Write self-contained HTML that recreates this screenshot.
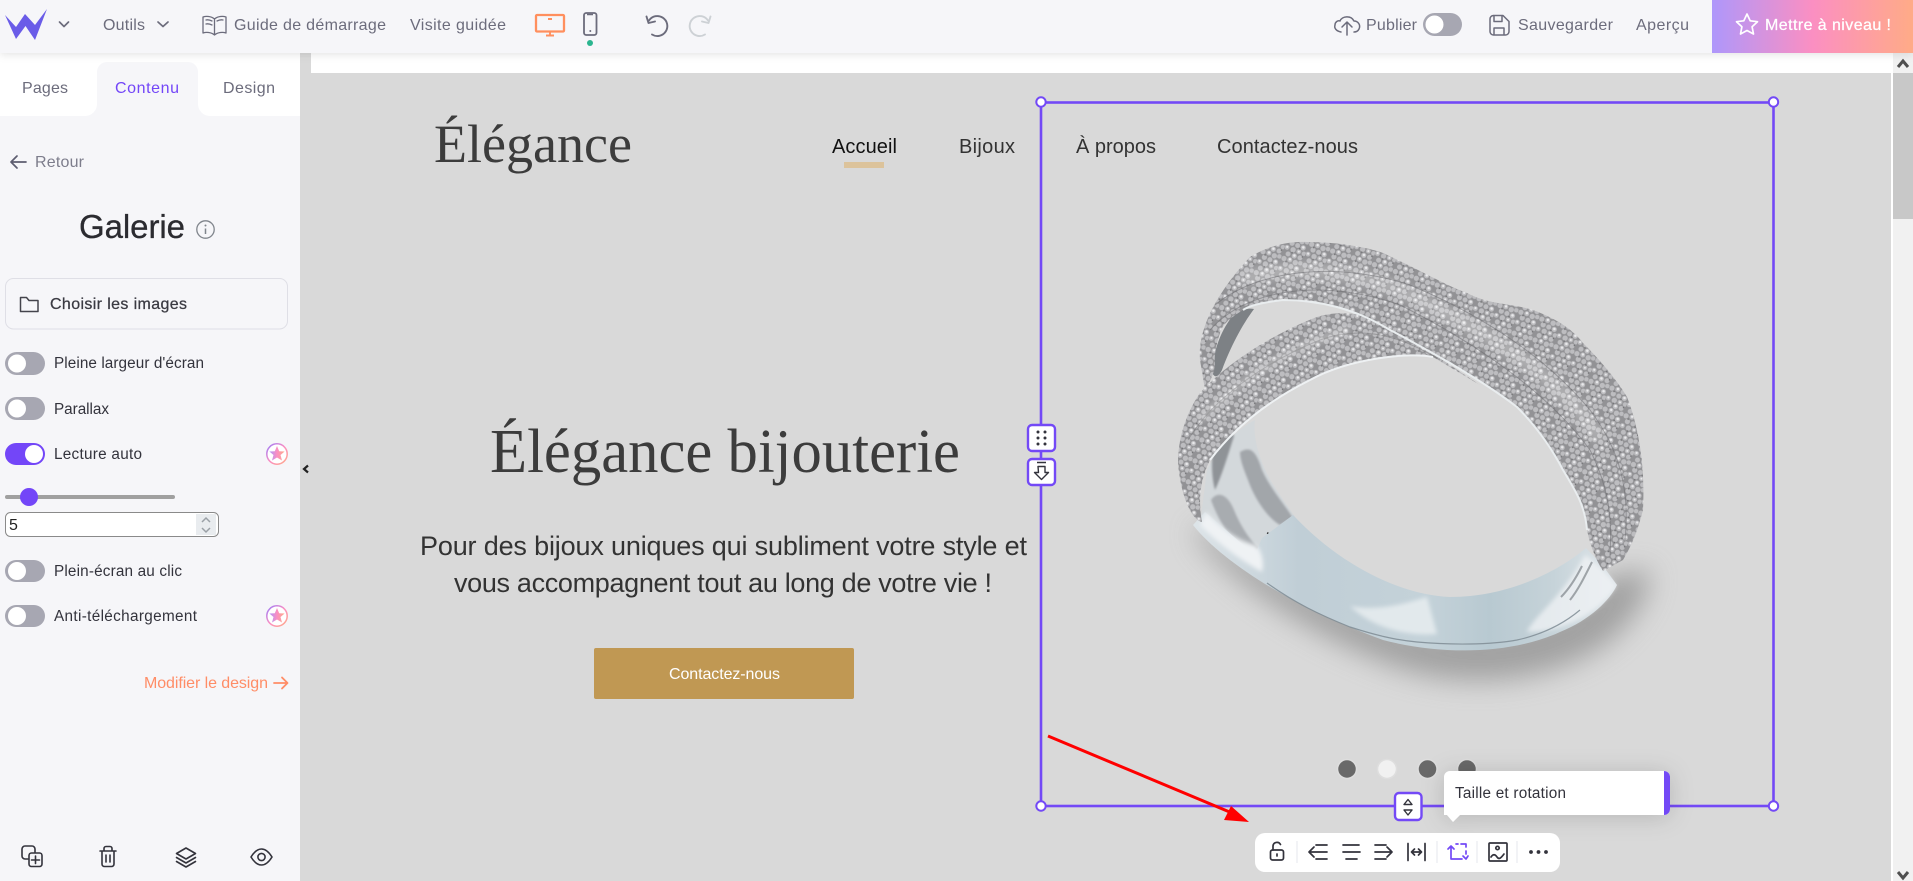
<!DOCTYPE html>
<html lang="fr"><head><meta charset="utf-8"><title>Galerie</title>
<style>
html,body{margin:0;padding:0;width:1913px;height:881px;overflow:hidden;background:#d9d9d9}
svg{display:block;position:absolute;left:0;top:0}
text{font-family:"Liberation Sans",sans-serif;white-space:pre}
.t{font-size:16px;fill:#6c6c7c}
.l{font-size:15.3px;fill:#33333c}
.s{font-family:"Liberation Serif",serif;fill:#3c3c3c}
.n{font-size:20px;fill:#333}
.i{fill:none;stroke:#6c6c7c;stroke-width:1.7;stroke-linecap:round;stroke-linejoin:round}
.d{fill:none;stroke:#33333c;stroke-width:1.7;stroke-linecap:round;stroke-linejoin:round}
</style></head><body>
<svg width="1913" height="881" viewBox="0 0 1913 881" xmlns="http://www.w3.org/2000/svg">
<defs>
<linearGradient id="up" x1="0" x2="1" y1="0" y2="0"><stop offset="0" stop-color="#ae97fb"/><stop offset=".5" stop-color="#fb8fc2"/><stop offset="1" stop-color="#ffab87"/></linearGradient>
<linearGradient id="bd" x1="0" x2="1" y1="0" y2="1"><stop offset="0" stop-color="#9a7bfa"/><stop offset=".5" stop-color="#fb8fc2"/><stop offset="1" stop-color="#ffab87"/></linearGradient>
<linearGradient id="sh" x1="0" x2="1" y1="0" y2="0"><stop offset="0" stop-color="#dde4e8"/><stop offset=".25" stop-color="#c0ced6"/><stop offset=".55" stop-color="#c4d2d9"/><stop offset=".7" stop-color="#b8c9d1"/><stop offset=".85" stop-color="#c6d3d9"/><stop offset="1" stop-color="#e0e6ea"/></linearGradient>
<pattern id="dia" width="22" height="22" patternUnits="userSpaceOnUse" patternTransform="rotate(18)">
<rect width="22" height="22" fill="#929295"/>
<g fill="#bdbdc0"><circle cx="3" cy="3" r="2.6"/><circle cx="9" cy="2.5" r="2.5"/><circle cx="15" cy="3.5" r="2.7"/><circle cx="20" cy="2.5" r="2.3"/><circle cx="6" cy="8" r="2.6"/><circle cx="12" cy="8.5" r="2.5"/><circle cx="18" cy="9" r="2.6"/><circle cx="2.5" cy="13.5" r="2.4"/><circle cx="9" cy="14" r="2.7"/><circle cx="15" cy="14" r="2.4"/><circle cx="20.5" cy="14.5" r="2.3"/><circle cx="5.5" cy="19.5" r="2.5"/><circle cx="12" cy="19.5" r="2.6"/><circle cx="18" cy="19.5" r="2.5"/></g>
<g fill="#e9e9eb"><circle cx="9" cy="2" r="1.2"/><circle cx="18" cy="8.5" r="1.3"/><circle cx="2.5" cy="13" r="1.1"/><circle cx="12" cy="19" r="1.3"/><circle cx="15" cy="14" r="1"/></g>
<g fill="#6f6f72"><circle cx="6" cy="5.500" r=".8"/><circle cx="15" cy="11" r=".8"/><circle cx="9" cy="17" r=".8"/><circle cx="20" cy="18" r=".7"/></g>
</pattern>
<filter id="b14" x="-30%" y="-50%" width="160%" height="200%"><feGaussianBlur stdDeviation="14"/></filter>
<filter id="b5" x="-20%" y="-20%" width="140%" height="140%"><feGaussianBlur stdDeviation="5"/></filter>
<filter id="b2" x="-20%" y="-20%" width="140%" height="140%"><feGaussianBlur stdDeviation="2"/></filter>
<filter id="b1" x="-20%" y="-20%" width="140%" height="140%"><feGaussianBlur stdDeviation="1"/></filter>
<filter id="sd" x="-30%" y="-60%" width="160%" height="220%"><feDropShadow dx="0" dy="2" stdDeviation="12" flood-color="#000" flood-opacity=".16"/></filter>
<filter id="sb" x="-5%" y="-50%" width="110%" height="220%"><feDropShadow dx="0" dy="2" stdDeviation="4" flood-color="#000" flood-opacity=".1"/></filter>
<clipPath id="ca"><path d="M1200 360C1198 335 1210 300 1250 257C1270 245 1290 241 1307 242C1340 242 1370 248 1383 253C1420 270 1445 285 1467 293C1490 305 1510 303 1533 310C1560 320 1575 332 1583 343C1605 365 1620 385 1627 397C1640 430 1645 470 1643 510C1638 530 1632 545 1623 560L1603 571C1596 560 1590 545 1587 530C1585 505 1575 490 1563 470C1550 445 1535 425 1517 407C1495 390 1470 375 1450 363C1430 352 1410 340 1390 330C1370 318 1355 312 1337 307C1318 302 1300 300 1283 300C1265 302 1250 305 1243 310C1230 318 1222 325 1220 333C1216 345 1214 355 1215 367C1212 380 1207 385 1205 390Z"/></clipPath>
<clipPath id="cb"><path d="M1178 463C1178 440 1185 415 1200 393C1225 365 1270 335 1317 317C1345 308 1385 315 1417 343L1480 385L1433 357C1410 352 1350 358 1310 380C1280 395 1240 420 1210 460C1200 480 1198 500 1202 522C1190 520 1180 490 1178 463Z"/></clipPath>
</defs>

<!-- canvas -->
<rect x="300" y="53" width="1613" height="828" fill="#d9d9d9"/>
<rect x="311" y="53" width="1582" height="20" fill="#fff"/>
<rect x="1891" y="53" width="2" height="828" fill="#fff"/>
<rect x="1893" y="53" width="20" height="828" fill="#f1f1f1"/>
<rect x="1893" y="73" width="20" height="146" fill="#c8c8c8"/>
<path d="M1898 67l5-6 5 6" fill="none" stroke="#505050" stroke-width="3"/>
<path d="M1898 872l5 6 5-6" fill="none" stroke="#505050" stroke-width="3"/>

<!-- site header -->
<text class="s" x="434" y="162" font-size="54" textLength="198" lengthAdjust="spacingAndGlyphs">Élégance</text>
<text class="n" x="832" y="153" textLength="65" style="fill:#111">Accueil</text>
<rect x="844" y="162" width="40" height="6" fill="#dcc39b"/>
<text class="n" x="959" y="153" textLength="56">Bijoux</text>
<text class="n" x="1076" y="153" textLength="80">À propos</text>
<text class="n" x="1217" y="153" textLength="141">Contactez-nous</text>

<!-- hero -->
<text class="s" x="490" y="472" font-size="62" textLength="470" lengthAdjust="spacingAndGlyphs">Élégance bijouterie</text>
<text x="420" y="555" font-size="27" fill="#333" textLength="607">Pour des bijoux uniques qui subliment votre style et</text>
<text x="454" y="592" font-size="27" fill="#333" textLength="538">vous accompagnent tout au long de votre vie !</text>
<rect x="594" y="648" width="260" height="51" rx="2" fill="#c09853"/>
<text x="669" y="679" font-size="16" fill="#fff" textLength="111">Contactez-nous</text>

<!-- ring -->
<path d="M1195 535C1240 590 1320 640 1400 668C1470 692 1560 680 1610 640C1640 615 1650 590 1650 570L1610 575C1570 620 1480 640 1400 625C1320 600 1250 560 1200 525Z" fill="#7c7c7c" opacity=".6" filter="url(#b14)"/>
<!-- inner lobes -->
<path d="M1207 470C1220 445 1240 428 1255 420C1252 440 1262 470 1280 495L1297 520L1262 550L1255 570L1200 525Z" fill="#d3d8db"/>
<g filter="url(#b1)">
<path d="M1240 452C1250 446 1256 450 1262 470C1270 488 1285 505 1293 518L1280 525C1268 518 1255 500 1248 480C1244 470 1240 460 1240 452Z" fill="#a2a6aa"/>
<path d="M1211 500C1218 490 1228 495 1234 510C1240 525 1250 540 1258 548L1250 556C1235 545 1220 525 1211 500Z" fill="#a8acb0"/>
<path d="M1215 440C1222 432 1232 430 1234 436C1228 455 1222 475 1215 490C1211 475 1211 455 1215 440Z" fill="#8f9397"/>
</g>
<path d="M1267 533l16 5" stroke="#222" stroke-width="1.500"/>
<!-- dark back wedge -->
<path d="M1236 312C1244 309 1250 308 1254 309C1242 325 1230 348 1222 370C1218 378 1214 378 1212 372C1214 345 1224 325 1236 312Z" fill="#7d8185"/>
<!-- shank -->
<path d="M1193 525C1225 565 1300 610 1383 640C1440 655 1510 655 1560 632C1590 620 1610 600 1617 585L1603 566L1586 548C1560 570 1510 597 1450 597C1400 595 1340 565 1293 515L1262 538L1255 555L1205 512Z" fill="url(#sh)"/>
<g filter="url(#b2)">
<path d="M1350 606C1380 612 1410 602 1427 597L1437 634C1410 636 1375 630 1350 606Z" fill="#f0f3f5" opacity=".7"/>
<path d="M1527 632C1535 615 1560 600 1585 555C1600 565 1612 580 1616 586C1600 612 1565 632 1527 632Z" fill="#f0f3f5" opacity=".75"/>
<path d="M1200 525C1220 545 1240 560 1262 572C1265 560 1260 548 1255 545C1235 540 1218 525 1206 512Z" fill="#eff2f4"/>
</g>
<path d="M1267 583C1295 603 1320 615 1350 627C1375 635 1395 640 1417 642C1450 645 1490 645 1517 640C1540 635 1562 625 1580 610" fill="none" stroke="#7f8c94" stroke-width="1.200" opacity=".85"/>
<path d="M1570 600C1578 590 1584 578 1592 562M1561 597C1570 588 1576 578 1582 566" stroke="#8b9196" stroke-width="2" fill="none" opacity=".8"/>
<!-- band B -->
<path d="M1178 463C1178 440 1185 415 1200 393C1225 365 1270 335 1317 317C1345 308 1385 315 1417 343L1480 385L1433 357C1410 352 1350 358 1310 380C1280 395 1240 420 1210 460C1200 480 1198 500 1202 522C1190 520 1180 490 1178 463Z" fill="url(#dia)"/>
<g clip-path="url(#cb)" fill="none">
<path d="M1188 440C1215 395 1270 360 1320 340C1360 325 1400 335 1440 360" stroke="#737376" stroke-width="1" opacity=".5"/>
<path d="M1200 420C1240 380 1290 345 1350 330" stroke="#fff" stroke-width="9" opacity=".22" filter="url(#b2)"/>
</g>
<path d="M1210 460C1240 420 1280 395 1310 380C1350 358 1410 352 1433 357" fill="none" stroke="#eef1f3" stroke-width="2"/>
<!-- band A -->
<path d="M1200 360C1198 335 1210 300 1250 257C1270 245 1290 241 1307 242C1340 242 1370 248 1383 253C1420 270 1445 285 1467 293C1490 305 1510 303 1533 310C1560 320 1575 332 1583 343C1605 365 1620 385 1627 397C1640 430 1645 470 1643 510C1638 530 1632 545 1623 560L1603 571C1596 560 1590 545 1587 530C1585 505 1575 490 1563 470C1550 445 1535 425 1517 407C1495 390 1470 375 1450 363C1430 352 1410 340 1390 330C1370 318 1355 312 1337 307C1318 302 1300 300 1283 300C1265 302 1250 305 1243 310C1230 318 1222 325 1220 333C1216 345 1214 355 1215 367C1212 380 1207 385 1205 390Z" fill="url(#dia)"/>
<g clip-path="url(#ca)" fill="none">
<path d="M1240 280C1300 262 1370 270 1430 305C1490 335 1560 375 1600 440" stroke="#fff" stroke-width="13" opacity=".3" filter="url(#b5)"/>
<path d="M1215 305C1260 268 1340 262 1410 285C1470 310 1540 350 1590 410C1620 450 1630 490 1625 540" stroke="#68686b" stroke-width="1" opacity=".5"/>
<path d="M1210 330C1250 285 1330 280 1400 305C1480 345 1550 395 1590 450C1610 490 1612 520 1610 555" stroke="#68686b" stroke-width="1" opacity=".5"/>
</g>
<path d="M1587 530C1585 505 1575 490 1563 470C1550 445 1535 425 1517 407C1495 390 1470 375 1450 363C1430 352 1410 340 1390 330C1370 318 1355 312 1337 307C1318 302 1300 300 1283 300C1265 302 1250 305 1243 310" fill="none" stroke="#e9edef" stroke-width="2"/>

<!-- slider dots -->
<g stroke="#dedede" stroke-width="1.500">
<circle cx="1347" cy="769" r="9.500" fill="#696969"/><circle cx="1387" cy="769" r="9.500" fill="#f1f1f1"/><circle cx="1427.500" cy="769" r="9.500" fill="#696969"/><circle cx="1467" cy="769" r="9.500" fill="#696969"/>
</g>

<!-- selection frame -->
<rect x="1041" y="102.500" width="732.500" height="703.500" fill="none" stroke="#7349f6" stroke-width="2.600"/>
<g fill="#fff" stroke="#7349f6" stroke-width="2"><circle cx="1041" cy="102" r="4.700"/><circle cx="1773.500" cy="102" r="4.700"/><circle cx="1041" cy="806" r="4.700"/><circle cx="1773.500" cy="806" r="4.700"/></g>
<g fill="#fff" stroke="#7349f6" stroke-width="2.400">
<rect x="1028" y="425" width="27" height="26" rx="4"/><rect x="1028" y="459" width="27" height="26" rx="4"/><rect x="1395" y="793" width="26.500" height="27" rx="4"/>
</g>
<g fill="#33333c"><circle cx="1038" cy="432" r="1.500"/><circle cx="1045" cy="432" r="1.500"/><circle cx="1038" cy="438" r="1.500"/><circle cx="1045" cy="438" r="1.500"/><circle cx="1038" cy="444" r="1.500"/><circle cx="1045" cy="444" r="1.500"/></g>
<path d="M1037 462.500h9M1038 466.500h7v6h3.500l-7 7-7-7h4z" fill="none" stroke="#33333c" stroke-width="1.400" stroke-linejoin="round"/>
<path d="M1408 799.500l4 5h-8zM1404 810h8l-4 5z" fill="none" stroke="#33333c" stroke-width="1.400" stroke-linejoin="round"/>

<!-- tooltip -->
<g filter="url(#sd)"><path d="M1450 771H1664a6 6 0 0 1 6 6V809a6 6 0 0 1-6 6H1460L1453 822L1447 815H1444V777a6 6 0 0 1 6-6Z" fill="#fff"/></g>
<path d="M1664 771a6 6 0 0 1 6 6V809a6 6 0 0 1-6 6Z" fill="#7349f6"/>
<text class="l" x="1455" y="798" textLength="111">Taille et rotation</text>

<!-- toolbar -->
<rect x="1255" y="833" width="305" height="39" rx="10" fill="#fff"/>
<path d="M1297 841v22M1437 841v22M1477 841v22M1517 841v22" stroke="#e8ebf0" stroke-width="1.200"/>
<g class="d">
<rect x="1270.500" y="850" width="13" height="10" rx="2"/><path d="M1273 850v-4a4 4 0 0 1 7.500-1.500M1277 854v2"/>
<path d="M1316 845h11M1310 852h17M1316 859h11M1314 847l-5 5 5 5"/>
<path d="M1343 845h16M1343 852h17M1346 859h11"/>
<path d="M1375 845h11M1375 852h17M1375 859h11M1387 847l5 5-5 5"/>
<path d="M1408 843.500v17M1425 843.500v17M1411.500 852h10M1414.500 849l-3 3 3 3M1418.500 849l3 3-3 3"/>
<rect x="1489" y="843" width="18" height="18" rx="1"/><circle cx="1497.500" cy="848" r="1.700"/><path d="M1491 857c2-3 4-3 6 0s4 1 7-3"/>
</g>
<g fill="none" stroke="#7349f6" stroke-width="1.700" stroke-linecap="round" stroke-linejoin="round">
<path d="M1451 846v13h11M1448 849l3-3 3 3"/><path d="M1456 844h2M1461 844h5v3M1466 851v3M1463 856l3 3 2-3"/>
</g>
<g fill="#33333c"><circle cx="1531" cy="852" r="1.900"/><circle cx="1538.500" cy="852" r="1.900"/><circle cx="1546" cy="852" r="1.900"/></g>

<!-- red arrow -->
<path d="M1048 736L1232 813" stroke="#f00" stroke-width="3" fill="none"/>
<path d="M1249 822L1224 820L1231 806Z" fill="#f00"/>

<!-- sidebar -->
<rect x="0" y="53" width="300" height="828" fill="#f6f6f9"/>
<rect x="0" y="53" width="300" height="63" fill="#fff"/>
<path d="M97 116V72a10 10 0 0 1 10-10H188a10 10 0 0 1 10 10V116Z" fill="#f6f6f9"/>
<path d="M85 116a12 12 0 0 0 12-12V116ZM210 116a12 12 0 0 1-12-12V116Z" fill="#f6f6f9"/>
<text class="t" x="22" y="93" textLength="46">Pages</text>
<text class="t" x="115" y="93" textLength="64" style="fill:#7346f8">Contenu</text>
<text class="t" x="223" y="93" textLength="52">Design</text>

<path d="M26 162H11M17 156l-6 6 6 6" class="i" style="stroke:#5d5d70"/>
<text class="t" x="35" y="167" textLength="49" style="fill:#7d7d8c">Retour</text>

<text x="79" y="238" font-size="33" fill="#2b2b30" stroke="#2b2b30" stroke-width=".3" textLength="106">Galerie</text>
<circle cx="205.500" cy="229.500" r="8.700" fill="none" stroke="#80858c" stroke-width="1.300"/>
<path d="M205.500 228.500v5.500" stroke="#80858c" stroke-width="1.500"/><circle cx="205.500" cy="225.500" r="1" fill="#80858c"/>

<rect x="5.500" y="278.500" width="282" height="50.500" rx="8" fill="#f6f6f9" stroke="#dfdfe6" stroke-width="1"/>
<path d="M20.500 297.500h6l2.500 3h9v11h-17.500z" fill="none" stroke="#44444c" stroke-width="1.500" stroke-linejoin="round"/>
<text x="50" y="309" font-size="16" fill="#3a3a42" stroke="#3a3a42" stroke-width=".25" textLength="137">Choisir les images</text>

<g fill="#a7a7b2">
<rect x="5" y="352" width="40" height="23" rx="11.500"/><rect x="5" y="397" width="40" height="23" rx="11.500"/><rect x="5" y="560" width="40" height="22" rx="11"/><rect x="5" y="605" width="40" height="22" rx="11"/>
</g>
<rect x="5" y="443" width="40" height="22" rx="11" fill="#7346f8"/>
<g fill="#fff"><circle cx="17" cy="363.500" r="9"/><circle cx="17" cy="408.500" r="9"/><circle cx="34" cy="454" r="9"/><circle cx="17" cy="571" r="9"/><circle cx="17" cy="616" r="9"/></g>
<text class="l" x="54" y="368" textLength="150">Pleine largeur d'écran</text>
<text class="l" x="54" y="414" textLength="55">Parallax</text>
<text class="l" x="54" y="459" textLength="88">Lecture auto</text>
<text class="l" x="54" y="576" textLength="128">Plein-écran au clic</text>
<text class="l" x="54" y="621" textLength="143">Anti-téléchargement</text>

<g transform="translate(277 454)"><circle r="10.200" fill="#fff" stroke="url(#bd)" stroke-width="1.500"/><polygon points="0,-8 2.200,-2.800 7.600,-2.500 3.500,1 5,6.500 0,3.500 -5,6.500 -3.500,1 -7.600,-2.500 -2.200,-2.800" fill="url(#up)"/></g>
<g transform="translate(277 616)"><circle r="10.200" fill="#fff" stroke="url(#bd)" stroke-width="1.500"/><polygon points="0,-8 2.200,-2.800 7.600,-2.500 3.500,1 5,6.500 0,3.500 -5,6.500 -3.500,1 -7.600,-2.500 -2.200,-2.800" fill="url(#up)"/></g>

<rect x="5" y="495" width="170" height="4" rx="2" fill="#a0a0a0"/>
<circle cx="29" cy="497" r="9" fill="#7346f8"/>
<rect x="5.500" y="512.500" width="213" height="24" rx="5" fill="#fff" stroke="#8a8a8a" stroke-width="1"/>
<rect x="196" y="514" width="20" height="21" fill="#e9ecef"/>
<path d="M202 522l4-4 4 4M202 528l4 4 4-4" fill="none" stroke="#9aa0a6" stroke-width="1.500"/>
<text x="9" y="530" font-size="16" fill="#222">5</text>

<text x="144" y="688" font-size="16" fill="#ff8d67" textLength="124">Modifier le design</text>
<path d="M274 683h13M282 677.500l5.500 5.500-5.500 5.500" fill="none" stroke="#ff8d67" stroke-width="1.800" stroke-linecap="round" stroke-linejoin="round"/>

<g class="d" style="stroke-width:1.600">
<path d="M28 859h-3a3 3 0 0 1-3-3v-7a3 3 0 0 1 3-3h7a3 3 0 0 1 3 3v3"/><rect x="29" y="853" width="13" height="13.500" rx="2.500"/><path d="M35.500 856v7.500M31.500 860h8"/>
<path d="M100 851h16M104 851v-2.500a2 2 0 0 1 2-2h4a2 2 0 0 1 2 2v2.500M102 851v13a2.500 2.500 0 0 0 2.500 2.500h7a2.500 2.500 0 0 0 2.500-2.500v-13M106 855v7M110 855v7"/>
<path d="M186 848l9.500 5.500-9.500 5.500-9.500-5.500zM176.500 857.500l9.500 5.500 9.500-5.500M176.500 861.500l9.500 5.500 9.500-5.500"/>
<path d="M251 857c4-6.500 8-8 10.500-8s6.500 1.500 10.500 8c-4 6.500-8 8-10.500 8s-6.500-1.500-10.500-8z"/><circle cx="261.500" cy="857" r="3.600"/>
</g>
<path d="M308 465.500l-4 3.500 4 3.500" fill="none" stroke="#222" stroke-width="2.200"/>

<!-- top bar -->
<g filter="url(#sb)"><rect x="0" y="0" width="1913" height="53" fill="#f6f6f9"/></g>
<path d="M5 15L16 39L25.500 26L35 40L47 9L35 25L25 14L16 27Z" fill="#6a5ce8"/>
<path d="M59.500 22l4.500 4.500 4.500-4.500" class="i"/>
<text class="t" x="103" y="30" textLength="42">Outils</text>
<path d="M158 22l5 4.500 5-4.500" class="i"/>
<path d="M214.500 19C211 16 206 16 203 17V33C206 32 211 32 214.500 35C218 32 223 32 226 33V17C223 16 218 16 214.500 19ZM214.500 19V35M206 20c2-.5 4 0 6 1M206 24c2-.5 4 0 6 1M223 20c-2-.5-4 0-6 1" class="i" style="stroke-width:1.300"/>
<text class="t" x="234" y="30" textLength="152">Guide de démarrage</text>
<text class="t" x="410" y="30" textLength="96">Visite guidée</text>
<rect x="536" y="15" width="28" height="16.500" rx="1" fill="none" stroke="#ff8f5e" stroke-width="2.300"/>
<path d="M546 35.500h8M550 31v4.500M548 19h4" stroke="#ff8f5e" stroke-width="1.900" fill="none"/>
<rect x="584" y="13" width="12.500" height="22" rx="2.200" fill="none" stroke="#6c6c7c" stroke-width="1.800"/>
<path d="M587 14.500h6" stroke="#6c6c7c" stroke-width="1.500"/><circle cx="590.300" cy="31" r="1" fill="#6c6c7c"/>
<circle cx="590" cy="43" r="3" fill="#2bb58f"/>
<g fill="none" stroke="#6c6c7c" stroke-width="1.900" stroke-linecap="round" stroke-linejoin="round"><path d="M649 20.500A10 10 0 1 1 652 34.500"/><path d="M646.500 16.500L648.500 23L655 21.500"/></g>
<g fill="none" stroke="#cdd1d5" stroke-width="1.900" stroke-linecap="round" stroke-linejoin="round"><path d="M708 20.500A10 10 0 1 0 705 34.500"/><path d="M710.500 16.500L708.500 23L702 21.500"/></g>

<path d="M1341 32C1336 31 1334 28 1335 25C1335 22 1338 20 1340 21C1342 16 1351 15 1354 21C1358 21 1361 25 1359 29C1358 31 1356 32 1354 32M1347 35V23M1342 27l5-5 5 5" class="i" style="stroke-width:1.500"/>
<text class="t" x="1366" y="30" textLength="51">Publier</text>
<rect x="1423" y="13" width="39" height="23" rx="11.500" fill="#a7a7b2"/><circle cx="1434.500" cy="24.500" r="9" fill="#fff"/>
<path d="M1493 15.500h10l6 6v10a3.500 3.500 0 0 1-3.500 3.500h-12a3.500 3.500 0 0 1-3.500-3.500v-12.500a3.500 3.500 0 0 1 3.500-3.500zM1494 15.500v6h8v-6M1494 35v-7h10v7" class="i" style="stroke-width:1.500"/>
<text class="t" x="1518" y="30" textLength="95">Sauvegarder</text>
<text class="t" x="1636" y="30" textLength="53">Aperçu</text>
<rect x="1712" y="0" width="201" height="53" fill="url(#up)"/>
<polygon points="1747,14 1750.200,20.800 1757.500,21.700 1752.100,26.800 1753.500,34 1747,30.500 1740.500,34 1741.900,26.800 1736.500,21.700 1743.800,20.800" fill="none" stroke="#fff" stroke-width="1.700" stroke-linejoin="round"/>
<text x="1765" y="30" font-size="16" fill="#fff" stroke="#fff" stroke-width=".25" textLength="126">Mettre à niveau !</text>
</svg>
</body></html>
